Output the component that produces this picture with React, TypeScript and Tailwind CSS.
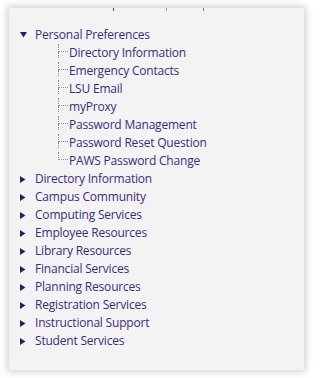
import React from "react";

const children = [
  "Directory Information",
  "Emergency Contacts",
  "LSU Email",
  "myProxy",
  "Password Management",
  "Password Reset Question",
  "PAWS Password Change",
];

const collapsed = [
  "Directory Information",
  "Campus Community",
  "Computing Services",
  "Employee Resources",
  "Library Resources",
  "Financial Services",
  "Planning Resources",
  "Registration Services",
  "Instructional Support",
  "Student Services",
];

function Down() {
  return (
    <svg width="7" height="6" viewBox="0 0 7 6">
      <polygon points="0,0 7,0 3.5,5.5" fill="#34185f" />
    </svg>
  );
}

function Right() {
  return (
    <svg width="6" height="7" viewBox="0 0 6 7">
      <polygon points="0,0 5.5,3.5 0,7" fill="#34185f" />
    </svg>
  );
}

export default function App() {
  return (
    <div
      className="min-h-screen bg-white pt-[8px] pl-[9px]"
      style={{ fontFamily: '"Open Sans", "Noto Sans", sans-serif' }}
    >
      <div className="w-[295px] h-[362px] bg-[#f3f3f3] shadow-[0_0_7px_2px_rgba(0,0,0,0.18)]">
        <div className="flex h-[3px] pl-[104px]">
          <span className="w-px h-[3px] bg-[#7a3a55]" />
          <span className="w-px h-[3px] ml-[52px] bg-[#b08aa0]" />
          <span className="w-px h-[3px] ml-[36px] bg-[#5a8ac0]" />
        </div>
        <div className="pt-[15px] pl-[11px] text-[12px] tracking-[-0.2px] text-[#3b2c7c] leading-[18px]">
          <div className="flex items-center h-[18px]">
            <div className="w-[15px] flex items-center">
              <Down />
            </div>
            <span>Personal Preferences</span>
          </div>
          <div className="pl-[38px]">
            {children.map((c, i) => {
              const last = i === children.length - 1;
              return (
                <div key={c} className="flex h-[18px]">
                  <div className="w-[11px] flex flex-col">
                    <div className="h-[8px] w-[10px] border-l border-b border-dotted border-[#8a8a8a]" />
                    {!last && (
                      <div className="h-[6px] border-l border-dotted border-[#8a8a8a]" />
                    )}
                  </div>
                  <span className="whitespace-nowrap">{c}</span>
                </div>
              );
            })}
          </div>
          {collapsed.map((c) => (
            <div key={c} className="flex items-center h-[18px]">
              <div className="w-[15px] flex items-center">
                <Right />
              </div>
              <span>{c}</span>
            </div>
          ))}
        </div>
      </div>
    </div>
  );
}
